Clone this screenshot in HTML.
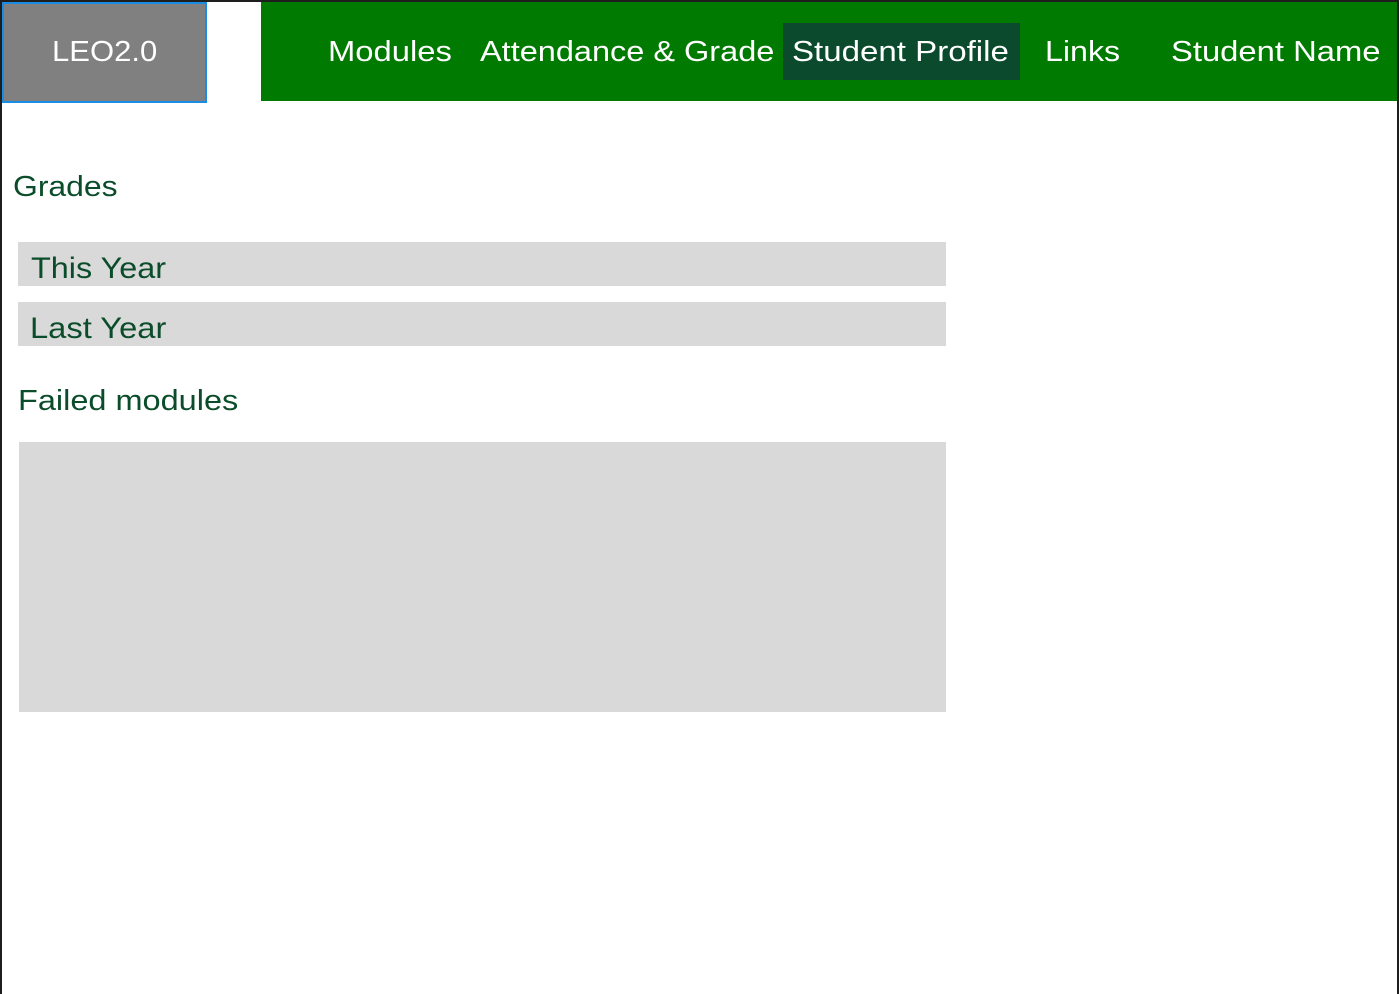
<!DOCTYPE html>
<html><head><style>
body{margin:0;width:1399px;height:994px;background:#1e1e1e;font-family:"Liberation Sans",sans-serif;overflow:hidden}
#pg{position:absolute;left:2px;top:2px;width:1395px;height:992px;background:#fff}
.a{position:absolute;transform-origin:left top;white-space:nowrap}
.nav{color:#fff;font-size:29px;top:36px;transform:scaleX(1.13)}
.g{color:#0b4d2a;font-size:29px;transform:scaleX(1.12)}
.box{background:#d9d9d9}
</style></head><body>
<div id="pg"></div>
<div class="a" style="left:2px;top:2px;width:201px;height:97px;background:#808080;border:2px solid #1b8ce3"></div>
<div class="a" style="left:52px;top:36px;color:#fff;font-size:29px;transform:scaleX(1.07)">LEO2.0</div>
<div class="a" style="left:261px;top:2px;width:1136px;height:99px;background:#007a00"></div>
<div class="a" style="left:783px;top:23px;width:237px;height:57px;background:#0b4a2c"></div>
<div class="a nav" style="left:328px">Modules</div>
<div class="a nav" style="left:480px;transform:scaleX(1.12)">Attendance &amp; Grade</div>
<div class="a nav" style="left:792px;transform:scaleX(1.14)">Student Profile</div>
<div class="a nav" style="left:1045px;transform:scaleX(1.11)">Links</div>
<div class="a nav" style="left:1171px;transform:scaleX(1.13)">Student Name</div>
<div class="a g" style="left:13px;top:171px;transform:scaleX(1.1)">Grades</div>
<div class="a box" style="left:18px;top:242px;width:928px;height:44px"></div>
<div class="a g" style="left:31px;top:252px;font-size:30px;transform:scaleX(1.08)">This Year</div>
<div class="a box" style="left:18px;top:302px;width:928px;height:44px"></div>
<div class="a g" style="left:30px;top:312px;font-size:30px;transform:scaleX(1.09)">Last Year</div>
<div class="a g" style="left:18px;top:385px">Failed modules</div>
<div class="a box" style="left:19px;top:442px;width:927px;height:270px"></div>
</body></html>
